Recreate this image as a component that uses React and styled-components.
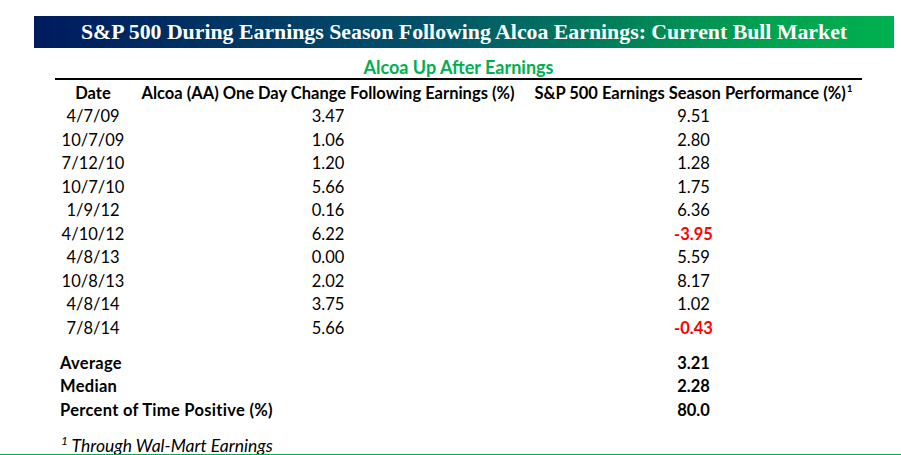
import React from "react";
import styled, { createGlobalStyle } from "styled-components";

const GlobalStyle = createGlobalStyle`
  html, body {
    margin: 0;
    padding: 0;
    background: #ffffff;
  }
  body {
    font-family: Lato, "Open Sans", sans-serif;
    color: #000000;
  }
`;

const Page = styled.div`
  width: 901px;
  height: 455px;
  box-sizing: border-box;
  border-bottom: 1px solid #00b050;
  padding-top: 16px;
  overflow: hidden;
`;

const Banner = styled.div`
  margin-left: 34px;
  width: 860px;
  height: 32px;
  background: linear-gradient(90deg, #001a5e 0%, #01516a 45%, #00a24f 85%, #00b050 100%);
  display: flex;
  align-items: center;
  justify-content: center;
  color: #ffffff;
  font-family: "Liberation Serif", "DejaVu Serif", serif;
  font-weight: bold;
  font-size: 21.8px;
  white-space: nowrap;
`;

const Subtitle = styled.div`
  margin: 9px 0 0 55px;
  width: 807px;
  height: 20px;
  line-height: 20px;
  text-align: center;
  color: #00b050;
  font-weight: bold;
  font-size: 18px;
`;

const Table = styled.div`
  margin-left: 55px;
  width: 807px;
  margin-top: 1px;
  border-top: 2px solid #000000;
  display: grid;
  grid-template-columns: 76px 394px 337px;
  font-size: 16.5px;
`;

const Cell = styled.div`
  box-sizing: border-box;
  height: 23.5px;
  padding-top: 1.5px;
  line-height: 22px;
  text-align: ${(p) => (p.$left ? "left" : "center")};
  padding-left: ${(p) => (p.$left ? "5px" : "0")};
  font-weight: ${(p) => (p.$bold ? "bold" : "normal")};
  letter-spacing: ${(p) => (p.$left ? "0.3px" : "0")};
  color: ${(p) => (p.$neg ? "#ff0000" : "#000000")};
  white-space: nowrap;
  grid-column: ${(p) => p.$span || "auto"};
  margin-top: ${(p) => p.$gap || "0"};
`;

const Sup = styled.sup`
  font-size: ${(p) => (p.$light ? "12px" : "10px")};
  font-weight: ${(p) => (p.$light ? "normal" : "bold")};
  line-height: 0;
  vertical-align: 7px;
  margin-left: 1px;
`;

const Footnote = styled.div`
  margin: 15px 0 0 60px;
  height: 20px;
  line-height: 20px;
  font-style: italic;
  font-size: 17.5px;
  white-space: nowrap;
`;

const rows = [
  ["4/7/09", "3.47", "9.51"],
  ["10/7/09", "1.06", "2.80"],
  ["7/12/10", "1.20", "1.28"],
  ["10/7/10", "5.66", "1.75"],
  ["1/9/12", "0.16", "6.36"],
  ["4/10/12", "6.22", "-3.95"],
  ["4/8/13", "0.00", "5.59"],
  ["10/8/13", "2.02", "8.17"],
  ["4/8/14", "3.75", "1.02"],
  ["7/8/14", "5.66", "-0.43"],
];

const summary = [
  ["Average", "3.21"],
  ["Median", "2.28"],
  ["Percent of Time Positive (%)", "80.0"],
];

export default function App() {
  return (
    <>
      <GlobalStyle />
      <Page>
        <Banner>S&amp;P 500 During Earnings Season Following Alcoa Earnings: Current Bull Market</Banner>
        <Subtitle>Alcoa Up After Earnings</Subtitle>
        <Table>
          <Cell $bold>Date</Cell>
          <Cell $bold>Alcoa (AA) One Day Change Following Earnings (%)</Cell>
          <Cell $bold>
            S&amp;P 500 Earnings Season Performance (%)<Sup>1</Sup>
          </Cell>
          {rows.map(([d, a, s]) => (
            <React.Fragment key={d}>
              <Cell>{d}</Cell>
              <Cell>{a}</Cell>
              <Cell $neg={s.startsWith("-")} $bold={s.startsWith("-")}>
                {s}
              </Cell>
            </React.Fragment>
          ))}
          {summary.map(([label, v], i) => (
            <React.Fragment key={label}>
              <Cell $left $bold $span="1 / 3" $gap={i === 0 ? "11.75px" : "0"}>
                {label}
              </Cell>
              <Cell $bold $gap={i === 0 ? "11.75px" : "0"}>
                {v}
              </Cell>
            </React.Fragment>
          ))}
        </Table>
        <Footnote>
          <Sup $light>1</Sup> Through Wal-Mart Earnings
        </Footnote>
      </Page>
    </>
  );
}
